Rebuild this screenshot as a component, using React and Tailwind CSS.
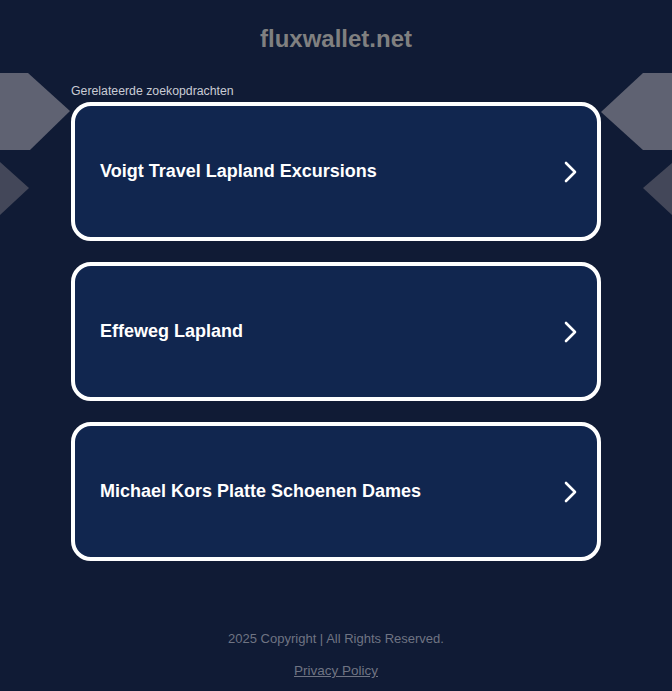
import React from 'react';

const searches = [
  'Voigt Travel Lapland Excursions',
  'Effeweg Lapland',
  'Michael Kors Platte Schoenen Dames',
];

const Chevron = () => (
  <svg width="16" height="22" viewBox="0 0 16 22" fill="none" className="shrink-0">
    <path d="M3 2l9 9-9 9" stroke="white" strokeWidth="2.6" strokeLinecap="round" strokeLinejoin="round" />
  </svg>
);

const Decor = () => (
  <svg className="absolute inset-0 pointer-events-none" width="672" height="691" viewBox="0 0 672 691">
    <polygon points="0,73 28,73 70,111 30,150 0,150" fill="#5f6272" />
    <polygon points="0,162 29,188 0,215" fill="#434759" />
    <polygon points="643,73 672,73 672,150 643,150 601,112" fill="#5f6272" />
    <polygon points="672,163 643,188 672,215" fill="#434759" />
  </svg>
);

export default function App() {
  return (
    <div
      className="relative min-h-[691px] w-full overflow-hidden bg-[#101b35]"
      style={{ fontFamily: '"Liberation Sans", Arial, sans-serif' }}
    >
      <Decor />
      <div className="relative flex flex-col items-center">
        <h1 className="mt-[25px] text-[24px] font-bold leading-[28px] text-[#808080]">fluxwallet.net</h1>
        <div className="mt-[31px] w-[530px]">
          <p className="text-[12.3px] leading-[14px] text-[#c9ccd4]">Gerelateerde zoekopdrachten</p>
          <div className="mt-[4px] flex flex-col gap-[21px]">
            {searches.map((s) => (
              <a
                key={s}
                href="#"
                className="flex h-[139px] items-center justify-between rounded-[20px] border-4 border-white bg-[#11264f] pl-[25px] pr-[18px]"
              >
                <span className="text-[18px] font-bold text-white">{s}</span>
                <Chevron />
              </a>
            ))}
          </div>
        </div>
        <p className="mt-[70px] text-[13px] leading-[15px] text-[#6f7483]">2025 Copyright | All Rights Reserved.</p>
        <a href="#" className="mt-[17px] text-[13.5px] leading-[16px] text-[#6f7483] underline">Privacy Policy</a>
      </div>
    </div>
  );
}
